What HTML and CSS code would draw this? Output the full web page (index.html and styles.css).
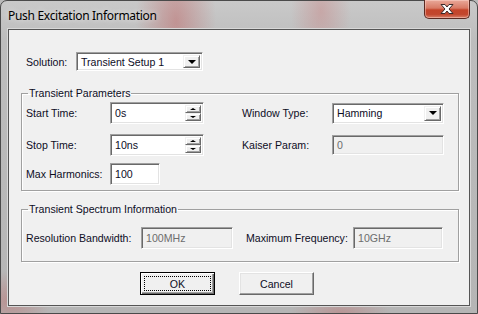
FILE: index.html
```html
<!DOCTYPE html>
<html lang="en">
<head>
    <meta charset="UTF-8">
    <title>Push Excitation Information</title>
    <link rel="stylesheet" href="styles.css">
</head>
<body>
    <div class="window">
        <div class="titlebar">
            <span class="title">Push Excitation Information</span>
            <div class="close">
                <svg width="16" height="12" viewBox="0 0 16 12">
                    <path d="M2 1.5 L6 1.5 L8 4 L10 1.5 L14 1.5 L10 6 L14 10.5 L10 10.5 L8 8 L6 10.5 L2 10.5 L6 6 Z" fill="#fff" stroke="#3a2a2a" stroke-width="1" stroke-linejoin="round"/>
                </svg>
            </div>
        </div>

        <div class="client">
            <div class="solution-row">
                <span class="solution-label">Solution:</span>
                <div class="select solution-select">
                    <span class="value">Transient Setup 1</span>
                    <span class="drop"><i class="arrow"></i></span>
                </div>
            </div>

            <fieldset class="group params">
                <legend>Transient Parameters</legend>
                <div class="row">
                    <span class="lbl">Start Time:</span>
                    <div class="field spin-field">
                        <span class="value">0s</span>
                        <span class="spin">
                            <span class="spin-btn"><i class="up"></i></span>
                            <span class="spin-btn"><i class="down"></i></span>
                        </span>
                    </div>
                    <span class="lbl2">Window Type:</span>
                    <div class="select window-select">
                        <span class="value">Hamming</span>
                        <span class="drop"><i class="arrow"></i></span>
                    </div>
                </div>
                <div class="row">
                    <span class="lbl">Stop Time:</span>
                    <div class="field spin-field">
                        <span class="value">10ns</span>
                        <span class="spin">
                            <span class="spin-btn"><i class="up"></i></span>
                            <span class="spin-btn"><i class="down"></i></span>
                        </span>
                    </div>
                    <span class="lbl2">Kaiser Param:</span>
                    <div class="field disabled kaiser">
                        <span class="value">0</span>
                    </div>
                </div>
                <div class="row last">
                    <span class="lbl">Max Harmonics:</span>
                    <div class="field harmonics">
                        <span class="value">100</span>
                    </div>
                </div>
            </fieldset>

            <fieldset class="group spectrum">
                <legend>Transient Spectrum Information</legend>
                <div class="row">
                    <span class="lbl wide">Resolution Bandwidth:</span>
                    <div class="field disabled bandwidth">
                        <span class="value">100MHz</span>
                    </div>
                    <span class="lbl3">Maximum Frequency:</span>
                    <div class="field disabled frequency">
                        <span class="value">10GHz</span>
                    </div>
                </div>
            </fieldset>

            <div class="buttons">
                <div class="btn default"><span class="focus">OK</span></div>
                <div class="btn">Cancel</div>
            </div>
        </div>
    </div>
</body>
</html>
```

FILE: styles.css
```css
body {
    margin: 0;
    width: 478px;
    height: 314px;
    overflow: hidden;
    background: #b9b9b9;
}

.window {
    box-sizing: border-box;
    width: 478px;
    height: 314px;
    padding: 0 7px 7px 7px;
    display: flex;
    flex-direction: column;
    border: 1px solid #4a4a4a;
    border-radius: 7px 7px 0 0;
    background:
        radial-gradient(ellipse 40px 90px at 175px 20px, rgba(190, 90, 90, 0.45), transparent),
        radial-gradient(ellipse 30px 60px at 320px 10px, rgba(200, 110, 110, 0.35), transparent),
        radial-gradient(ellipse 40px 30px at 10px 300px, rgba(190, 90, 90, 0.4), transparent),
        radial-gradient(ellipse 50px 20px at 340px 312px, rgba(190, 90, 90, 0.35), transparent),
        linear-gradient(to bottom, #c9c9c9 0, #bdbdbd 40px, #b5b5b5 100%);
}

/* title bar */

.titlebar {
    height: 28px;
    display: flex;
    align-items: flex-start;
}

.title {
    padding-top: 7px;
    font-family: "Noto Sans", "Open Sans", sans-serif;
    font-size: 12px;
    line-height: 16px;
    letter-spacing: -0.3px;
    color: #000;
    text-shadow: 0 0 6px rgba(255, 255, 255, 0.8);
}

.close {
    margin-left: auto;
    margin-top: -1px;
    width: 46px;
    height: 19px;
    box-sizing: border-box;
    border: 1px solid #5b2a22;
    border-top: none;
    border-radius: 0 0 5px 5px;
    background: linear-gradient(to bottom, #e9a99a 0, #d87a65 45%, #c4442a 55%, #c2472e 80%, #d8806a 100%);
    box-shadow: inset 0 0 0 1px rgba(255, 220, 210, 0.45);
    display: flex;
    align-items: center;
    justify-content: center;
}

/* client area */

.client {
    flex: 1;
    border: 1px solid #555;
    box-shadow: 0 0 0 1px #d8d8d8;
    background: #f0f0f0;
    padding: 22px 10px 0 12px;
    font-family: "Liberation Sans", Arial, sans-serif;
    font-size: 10.6px;
    color: #0d0d1f;
}

.solution-row {
    display: flex;
    align-items: center;
    height: 19px;
    padding-left: 5px;
}

.solution-label {
    width: 50px;
}

/* sunken text boxes */

.field,
.select {
    box-sizing: border-box;
    height: 22px;
    display: flex;
    align-items: center;
    background: #fff;
    border: 1px solid;
    border-color: #a0a0a0 #fff #fff #a0a0a0;
    box-shadow: inset 1px 1px 0 #696969, inset -1px -1px 0 #e3e3e3;
    padding: 2px 2px 2px 4px;
}

.field .value,
.select .value {
    flex: 1;
    white-space: nowrap;
}

.field.disabled {
    background: #f0f0f0;
    color: #6d6d6d;
}

.select {
    height: 21px;
}

.solution-select {
    width: 127px;
    height: 19px;
}

.drop {
    box-sizing: border-box;
    width: 17px;
    height: 100%;
    background: #f0f0f0;
    border: 1px solid;
    border-color: #f0f0f0 #696969 #696969 #f0f0f0;
    box-shadow: inset 1px 1px 0 #fff, inset -1px -1px 0 #a0a0a0;
    display: flex;
    align-items: center;
    justify-content: center;
}

.arrow,
.down {
    width: 0;
    height: 0;
    border-left: 4px solid transparent;
    border-right: 4px solid transparent;
    border-top: 4px solid #000;
}

.spin {
    width: 16px;
    height: 100%;
    display: flex;
    flex-direction: column;
}

.spin-btn {
    flex: 1;
    box-sizing: border-box;
    background: #f0f0f0;
    border: 1px solid;
    border-color: #f0f0f0 #696969 #696969 #f0f0f0;
    box-shadow: inset 1px 1px 0 #fff, inset -1px -1px 0 #a0a0a0;
    display: flex;
    align-items: center;
    justify-content: center;
}

.spin .down,
.spin .up {
    border-left-width: 3px;
    border-right-width: 3px;
}

.spin .down {
    border-top-width: 2px;
}

.up {
    width: 0;
    height: 0;
    border-left: 3px solid transparent;
    border-right: 3px solid transparent;
    border-bottom: 2px solid #000;
}

/* group boxes */

.group {
    margin: 0;
    padding: 0 0 0 4px;
    border: 1px solid #a0a0a0;
    box-shadow: 1px 1px 0 #fff, inset 1px 1px 0 #fff;
}

.group legend {
    margin-left: 2px;
    padding: 0 1px;
    line-height: 13px;
}

.params {
    margin-top: 16px;
    padding-bottom: 5px;
}

.spectrum {
    margin-top: 12px;
    padding-bottom: 12px;
}

.row {
    display: flex;
    align-items: center;
    height: 22px;
}

.params .row:first-of-type {
    margin-top: 2px;
}

.row + .row {
    margin-top: 10px;
}

.row.last {
    margin-top: 7px;
}

.lbl {
    width: 84px;
}

.lbl2 {
    width: 90px;
    margin-left: 38px;
}

.spin-field {
    width: 94px;
    padding-right: 2px;
}

.window-select {
    width: 112px;
}

.kaiser {
    width: 112px;
    height: 20px;
}

.harmonics {
    width: 50px;
}

.spectrum .row {
    margin-top: 11px;
}

.lbl.wide {
    width: 115px;
}

.bandwidth {
    width: 92px;
}

.lbl3 {
    width: 107px;
    margin-left: 13px;
}

.frequency {
    width: 90px;
}

/* dialog buttons */

.buttons {
    display: flex;
    gap: 24px;
    margin-top: 10px;
    padding-left: 119px;
}

.btn {
    box-sizing: border-box;
    width: 75px;
    height: 23px;
    display: flex;
    align-items: center;
    justify-content: center;
    background: #f0f0f0;
    border: 1px solid;
    border-color: #fff #696969 #696969 #fff;
    box-shadow: inset -1px -1px 0 #a0a0a0, inset 1px 1px 0 #e3e3e3;
}

.btn.default {
    border: 1px solid #000;
    box-shadow: inset 1px 1px 0 #fff, inset -1px -1px 0 #696969, inset -2px -2px 0 #a0a0a0;
    padding: 3px;
}

.focus {
    flex: 1;
    align-self: stretch;
    display: flex;
    align-items: center;
    justify-content: center;
    border: 1px dotted #000;
}
```
